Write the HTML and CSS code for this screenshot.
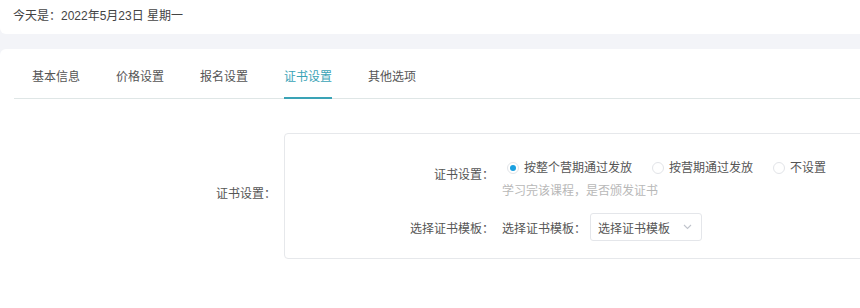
FILE: index.html
```html
<!DOCTYPE html>
<html lang="zh-CN">
<head>
<meta charset="utf-8">
<title>证书设置</title>
<link rel="stylesheet" href="styles.css">
</head>
<body>
<div class="page">
  <header class="topbar">今天是：2022年5月23日 星期一</header>
  <main class="card">
    <nav class="tabs">
      <span class="tab">基本信息</span>
      <span class="tab">价格设置</span>
      <span class="tab">报名设置</span>
      <span class="tab active">证书设置</span>
      <span class="tab">其他选项</span>
    </nav>
    <section class="outer-row">
      <div class="outer-label">证书设置：</div>
      <div class="panel">
        <div class="item item-radio">
          <div class="item-label label-radio">证书设置：</div>
          <div class="item-content">
            <div class="radios">
              <label class="radio checked"><span class="dot"></span>按整个营期通过发放</label>
              <label class="radio"><span class="dot"></span>按营期通过发放</label>
              <label class="radio"><span class="dot"></span>不设置</label>
            </div>
            <div class="hint">学习完该课程，是否颁发证书</div>
          </div>
        </div>
        <div class="item item-select">
          <div class="item-label">选择证书模板：</div>
          <div class="item-content select-row">
            <span class="select-label">选择证书模板：</span>
            <div class="select">
              <span class="select-text">选择证书模板</span>
              <svg class="chevron" width="9" height="6" viewBox="0 0 9 6"><path d="M1 1l3.5 3.5L8 1" fill="none" stroke="#c0c4cc" stroke-width="1.1"/></svg>
            </div>
          </div>
        </div>
      </div>
    </section>
  </main>
</div>
</body>
</html>
```

FILE: styles.css
```css
html, body {
  margin: 0;
  padding: 0;
}
body {
  background: #f3f4f8;
  font-family: "Liberation Sans", "Noto Sans CJK SC", sans-serif;
  font-size: 12px;
  color: #555;
  overflow: hidden;
}
.page {
  width: 860px;
  height: 308px;
  display: flex;
  flex-direction: column;
}
.topbar {
  height: 34px;
  box-sizing: border-box;
  padding: 8px 13px 0;
  line-height: 16px;
  background: #fff;
  color: #444;
  border-radius: 0 0 0 6px;
}
.card {
  margin-top: 15px;
  flex: 1;
  background: #fff;
  border-radius: 6px 0 0 0;
}
.tabs {
  display: flex;
  margin-left: 14px;
  border-bottom: 1px solid #dfe6e6;
}
.tab {
  margin: 0 18px;
  padding: 20px 0 12px;
  line-height: 17px;
  color: #555;
}
.tab.active {
  color: #3aa3b6;
  border-bottom: 2px solid #3aa3b6;
  padding-bottom: 11px;
  margin-bottom: -1px;
}
.outer-row {
  display: flex;
  align-items: center;
  margin-top: 34px;
}
.outer-label {
  width: 276px;
  text-align: right;
  color: #555;
  margin-right: 8px;
  margin-bottom: 7px;
}
.panel {
  flex: 1;
  margin-right: -20px;
  border: 1px solid #e6e8eb;
  border-radius: 4px;
  padding: 24px 0 17px;
}
.item {
  display: flex;
}
.item-label {
  width: 209px;
  text-align: right;
  margin-right: 8px;
  color: #555;
}
.label-radio {
  padding-top: 7px;
  line-height: 20px;
}
.radios {
  display: flex;
  padding-left: 5px;
  line-height: 20px;
}
.radio {
  display: flex;
  align-items: center;
  margin-right: 20px;
  color: #555;
}
.dot {
  width: 10px;
  height: 10px;
  border: 1px solid #e2e4e8;
  border-radius: 50%;
  margin-right: 5px;
  box-sizing: content-box;
  display: flex;
  align-items: center;
  justify-content: center;
}
.radio.checked .dot::after {
  content: "";
  width: 6px;
  height: 6px;
  border-radius: 50%;
  background: #1aa0e0;
}
.hint {
  color: #b8b8b8;
  line-height: 20px;
  margin-top: 3px;
}
.item-select {
  margin-top: 12px;
  align-items: center;
}
.select-row {
  display: flex;
  align-items: center;
}
.select-label {
  margin-right: 4px;
  color: #555;
}
.select {
  width: 112px;
  height: 28px;
  box-sizing: border-box;
  border: 1px solid #e4e6ea;
  border-radius: 3px;
  display: flex;
  align-items: center;
  justify-content: space-between;
  padding: 0 9px 0 7px;
}
.select-text {
  color: #555;
}
```
